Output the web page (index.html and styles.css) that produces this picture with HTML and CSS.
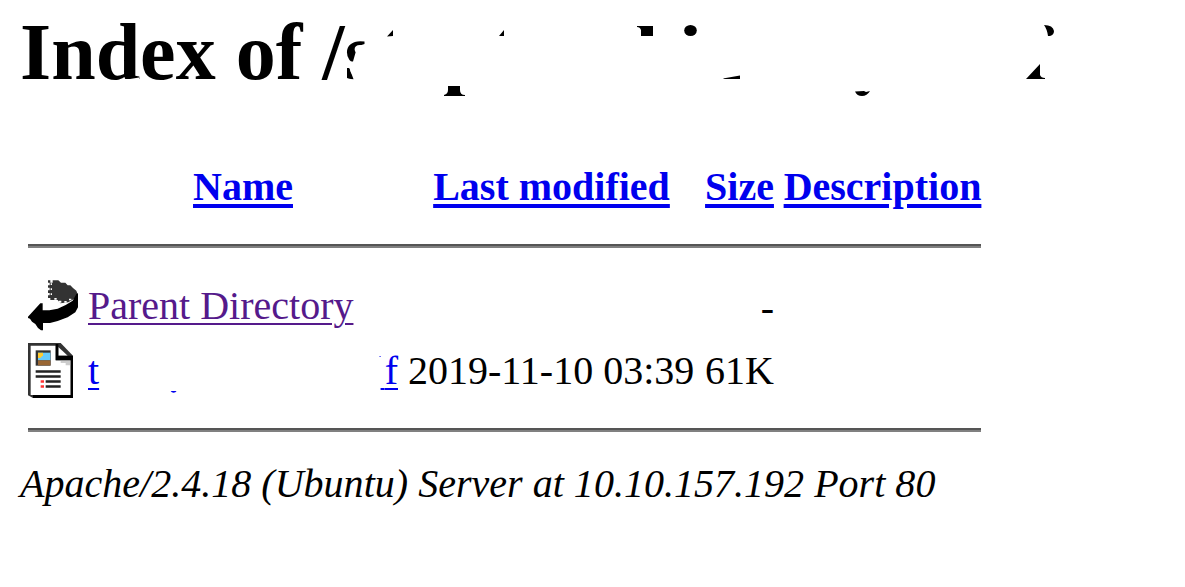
FILE: index.html
```
<!DOCTYPE html>
<html lang="en">
<head>
<meta charset="utf-8">
<title>Index of /</title>
<link rel="stylesheet" href="styles.css">
</head>
<body>
<header class="heading">
  <h1>Index of /s</h1>
  <svg class="heading-scraps" width="1185" height="110" viewBox="0 0 1185 110" aria-hidden="true">
    <path fill="#fff" d="M124 80L139 77.500V83H124ZM364.500 38H385V90H357.500L349 67H345V61.500H353L356 51L357.500 50L356.500 48L360 45.500L364.500 44ZM345 79.500H362V90H345Z"/>
    <path d="M387 36.500L393 30V36ZM499 36L504 30V36ZM637 26H653V36H641V30Q640 27 637 27ZM723 78.500L740 75.500V79H724ZM444 96V95Q448 94 448 90V86H460V90Q460 95 465 95V96ZM855 91.500L864 91L866 92L870 91Q867 96 862 96Q857 96 855 91.500ZM1044 25Q1053 25 1054 31Q1054 35 1050 36H1048Q1047 29 1044 25ZM1026 79L1040 64V75Q1041 78 1045 78V79Z"/>
    <ellipse cx="690.500" cy="30.500" rx="6.300" ry="5.500"/>
  </svg>
</header>
<main class="listing">
  <div class="row head">
    <span></span><a href="#">Name</a><a href="#">Last modified</a><a href="#">Size</a><a href="#">Description</a>
  </div>
  <hr>
  <div class="row parent">
    <svg width="50" height="55" viewBox="39 24 150 165" aria-hidden="true">
      <path fill="#333" d="M99 31H106V38H113V31H130L138 38H151L158 46H166L174 54L184 62L189 75L182 84L160 97L136 100L128 90H106V84H99V76H104V69H99V61H104V53H99V46H104V38H99Z"/>
      <path fill="#fff" d="M107 40h4v5h-4zM107 55h4v5h-4zM107 70h4v5h-4zM118 84h7v5h-7zM132 92h7v6h-7zM148 93h7v5h-7zM162 86h7v5h-7z"/>
      <path d="M39 140L76 100H83V121H103L128 116L152 105L173 92L184 72L189 70V112L181 127L158 142L128 153L105 159H84V181H78L69 174L61 162L51 155L45 146L39 144Z"/>
    </svg>
    <div><a class="visited" href="#">Parent Directory</a></div><span></span><span class="size">-</span>
  </div>
  <div class="row file">
    <svg width="45" height="55" viewBox="39 219 135 165" aria-hidden="true">
      <path fill="#333" d="M39 219H137L174 257V384H54L39 376Z"/>
      <path fill="#fff" d="M47 227H122V271H167V375H47Z"/>
      <path fill="#ccc" d="M137 271H167V286H152V279H137Z"/>
      <path fill="#fff" d="M130 231L158 257H130Z"/>
      <path d="M122 222H130V257H174V271H122ZM167 264H174V384H54V375H167Z"/>
      <path fill="#333" d="M62 241H107V287H62Z"/>
      <path fill="#6cf" d="M69 248H106V271H69Z"/>
      <path fill="#963" d="M69 271H106V286H69Z"/>
      <path fill="#fc3" d="M69 248H84V256L76 264H69Z"/>
      <path fill="#222" d="M62 301H137V308H62ZM62 316H137V323H62ZM92 331H137V338H92ZM92 346H137V353H92Z"/>
      <path fill="#f33" d="M77 331H87V338H77ZM77 346H87V353H77Z"/>
    </svg>
    <div class="name"><a href="#">t</a><svg class="gap" width="287" height="40" viewBox="99 355 287 40" aria-hidden="true"><path fill="#00e" d="M171 391H177Q176 392.800 174 392.800T171 391ZM381 356H382V357H381ZM382 388H386V390H382Z"/></svg><a href="#">f</a></div><span>2019-11-10 03:39</span><span class="size">61K</span>
  </div>
  <hr class="end">
</main>
<address>Apache/2.4.18 (Ubuntu) Server at 10.10.157.192 Port 80</address>
</body>
</html>
```
FILE: styles.css
```
body {
  margin: 0;
  padding: 4px 20px 0;
  background: #fff;
  color: #000;
  font: 40px/46px "Liberation Serif", "Times New Roman", serif;
  overflow: hidden;
}
.heading { height: 160px; }
h1 { margin: 0; font-size: 80px; line-height: 96px; white-space: nowrap; }
.heading-scraps { position: absolute; top: 0; left: 0; }
.listing { width: 953px; margin-left: 8px; }
.row {
  display: grid;
  grid-template-columns: 50px 310px 287px 69px 197px;
  column-gap: 10px;
  white-space: nowrap;
}
.head { height: 80px; font-weight: bold; justify-items: center; }
.head a { text-decoration-thickness: 4px; text-underline-offset: 4px; }
a {
  color: #00e;
  text-decoration: underline;
  text-decoration-thickness: 2px;
  text-underline-offset: 4px;
}
.visited { color: #551a8b; }
hr {
  height: 4px;
  box-sizing: border-box;
  margin: 0;
  border: 0;
  border-top: 2px solid #555;
  background: #808080;
}
.parent { height: 65px; margin-top: 30px; align-items: start; }
.parent > :not(svg) { padding-top: 5px; }
.parent > .size { padding-top: 7px; }
.file { height: 55px; }
.file > :not(svg) { padding-top: 5px; }
.row > svg { display: block; }
.size { text-align: right; }
.name { display: flex; }
.gap { display: block; margin-top: 7px; }
.end { margin-top: 30px; }
address { margin-top: 29px; white-space: nowrap; letter-spacing: 0.02px; }
```
